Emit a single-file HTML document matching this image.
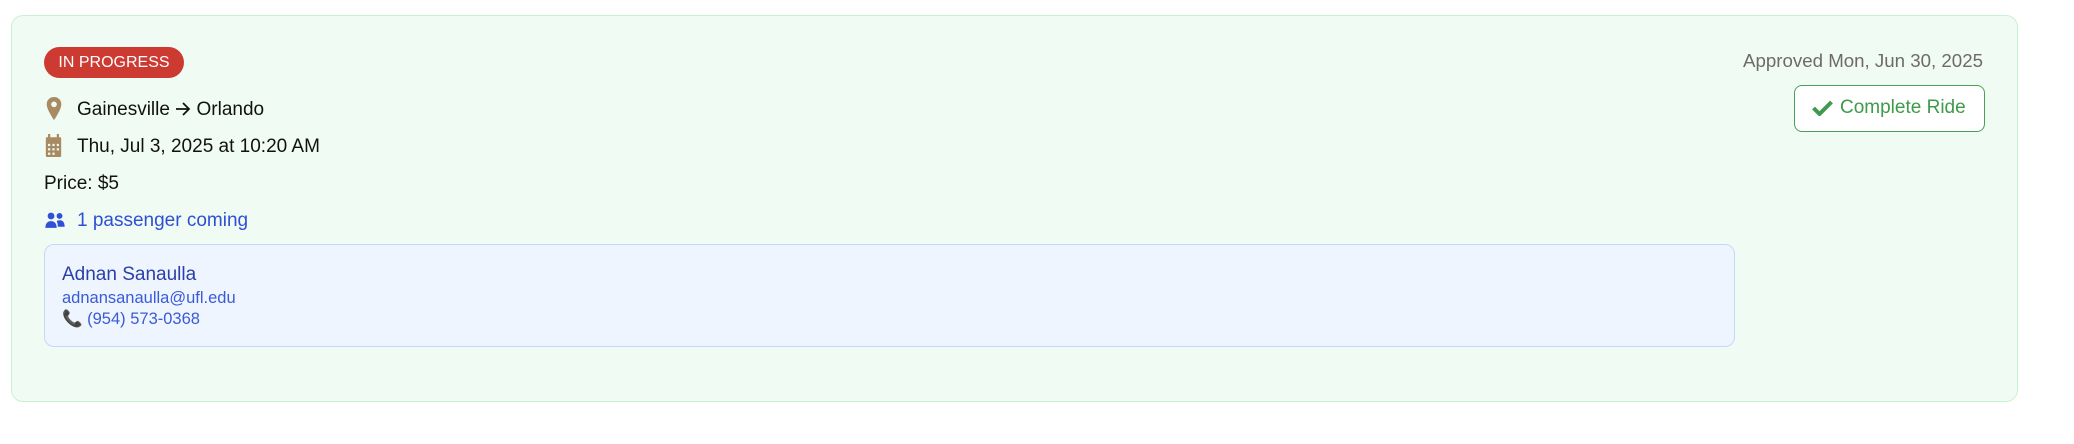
<!DOCTYPE html>
<html><head><meta charset="utf-8"><style>
*{box-sizing:border-box;margin:0;padding:0}
body{width:2074px;height:444px;background:#fff;font-family:"Liberation Sans",sans-serif;position:relative;overflow:hidden}
.card{position:absolute;left:11px;top:15px;width:2007px;height:387px;background:#f0fcf3;border:1.5px solid #c8f1d2;border-radius:12px}
.abs{position:absolute;white-space:nowrap}
.badge{left:44px;top:47px;width:140px;height:31px;background:#cc3a32;color:#fff;border-radius:16px;font-size:16px;line-height:31px;text-align:center}
.row{font-size:19px;color:#111;line-height:24px}
.inner{position:absolute;left:44px;top:244px;width:1691px;height:103px;background:#eef5fe;border:1.5px solid #c0d9f8;border-radius:10px}
.btn{left:1794px;top:85px;width:191px;height:47px;border:1.5px solid #4a9e55;border-radius:8px;background:#fff;color:#3f9a4c;font-size:19px;line-height:44px}
</style></head><body>
<div class="card"></div>
<div class="abs badge">IN PROGRESS</div>
<svg class="abs" style="left:46px;top:97px" width="16" height="23" viewBox="0 0 14 22"><path d="M7 0C3 0 0 3 0 7c0 5 7 15 7 15s7-10 7-15C14 3 11 0 7 0z" fill="#a88a63"/><circle cx="7" cy="7" r="2.7" fill="#f0fcf3"/></svg>
<div class="abs row" style="left:77px;top:98px">Gainesville <svg width="16" height="14" viewBox="0 0 16 14" style="vertical-align:-1px"><path d="M1 7h13M8 1l6 6-6 6" fill="none" stroke="#111" stroke-width="1.8"/></svg> Orlando</div>
<svg class="abs" style="left:45px;top:134px" width="17" height="23" viewBox="0 0 14 21"><rect x="2" y="0" width="2" height="4" fill="#a88a63"/><rect x="10" y="0" width="2" height="4" fill="#a88a63"/><rect x="0" y="3" width="14" height="18" rx="1" fill="#a88a63"/><g fill="#f0fcf3"><rect x="2" y="9" width="2" height="2"/><rect x="6" y="9" width="2" height="2"/><rect x="10" y="9" width="2" height="2"/><rect x="2" y="13" width="2" height="2"/><rect x="6" y="13" width="2" height="2"/><rect x="10" y="13" width="2" height="2"/><rect x="2" y="17" width="2" height="2"/><rect x="6" y="17" width="2" height="2"/></g></svg>
<div class="abs row" style="left:77px;top:135px">Thu, Jul 3, 2025 at 10:20 AM</div>
<div class="abs row" style="left:44px;top:172px">Price: $5</div>
<svg class="abs" style="left:44px;top:212px" width="22" height="17" viewBox="0 0 17 15"><circle cx="5" cy="3.5" r="3" fill="#3050d8"/><circle cx="12.5" cy="3.5" r="2.6" fill="#3050d8"/><path d="M0 14c0-4 2-6 5-6s5 2 5 6z" fill="#3050d8"/><path d="M10 8c1-.5 2-.7 3-.7 2.5 0 4 2 4 5.7h-6c0-2-.3-3.5-1-5z" fill="#3050d8"/></svg>
<div class="abs row" style="left:77px;top:209px;color:#2f4fd6">1 passenger coming</div>
<div class="inner"></div>
<div class="abs" style="left:62px;top:263px;font-size:19px;color:#2a3fa8;line-height:24px">Adnan Sanaulla</div>
<div class="abs" style="left:62px;top:288px;font-size:16.5px;color:#3a5bd6;line-height:20px">adnansanaulla@ufl.edu</div>
<div class="abs" style="left:62px;top:309px;font-size:16.5px;color:#3a5bd6;line-height:20px"><span style="color:#333">📞</span> (954) 573-0368</div>
<div class="abs" style="right:91px;top:50px;font-size:18.7px;color:#6e6a68;line-height:22px">Approved Mon, Jun 30, 2025</div>
<div class="abs btn"><svg style="position:absolute;left:17px;top:14px" width="21" height="16" viewBox="0 0 20 16"><path d="M1 8l6 6L19 2" fill="none" stroke="#3f9a4c" stroke-width="4"/></svg><span style="position:absolute;left:45px">Complete Ride</span></div>
</body></html>
